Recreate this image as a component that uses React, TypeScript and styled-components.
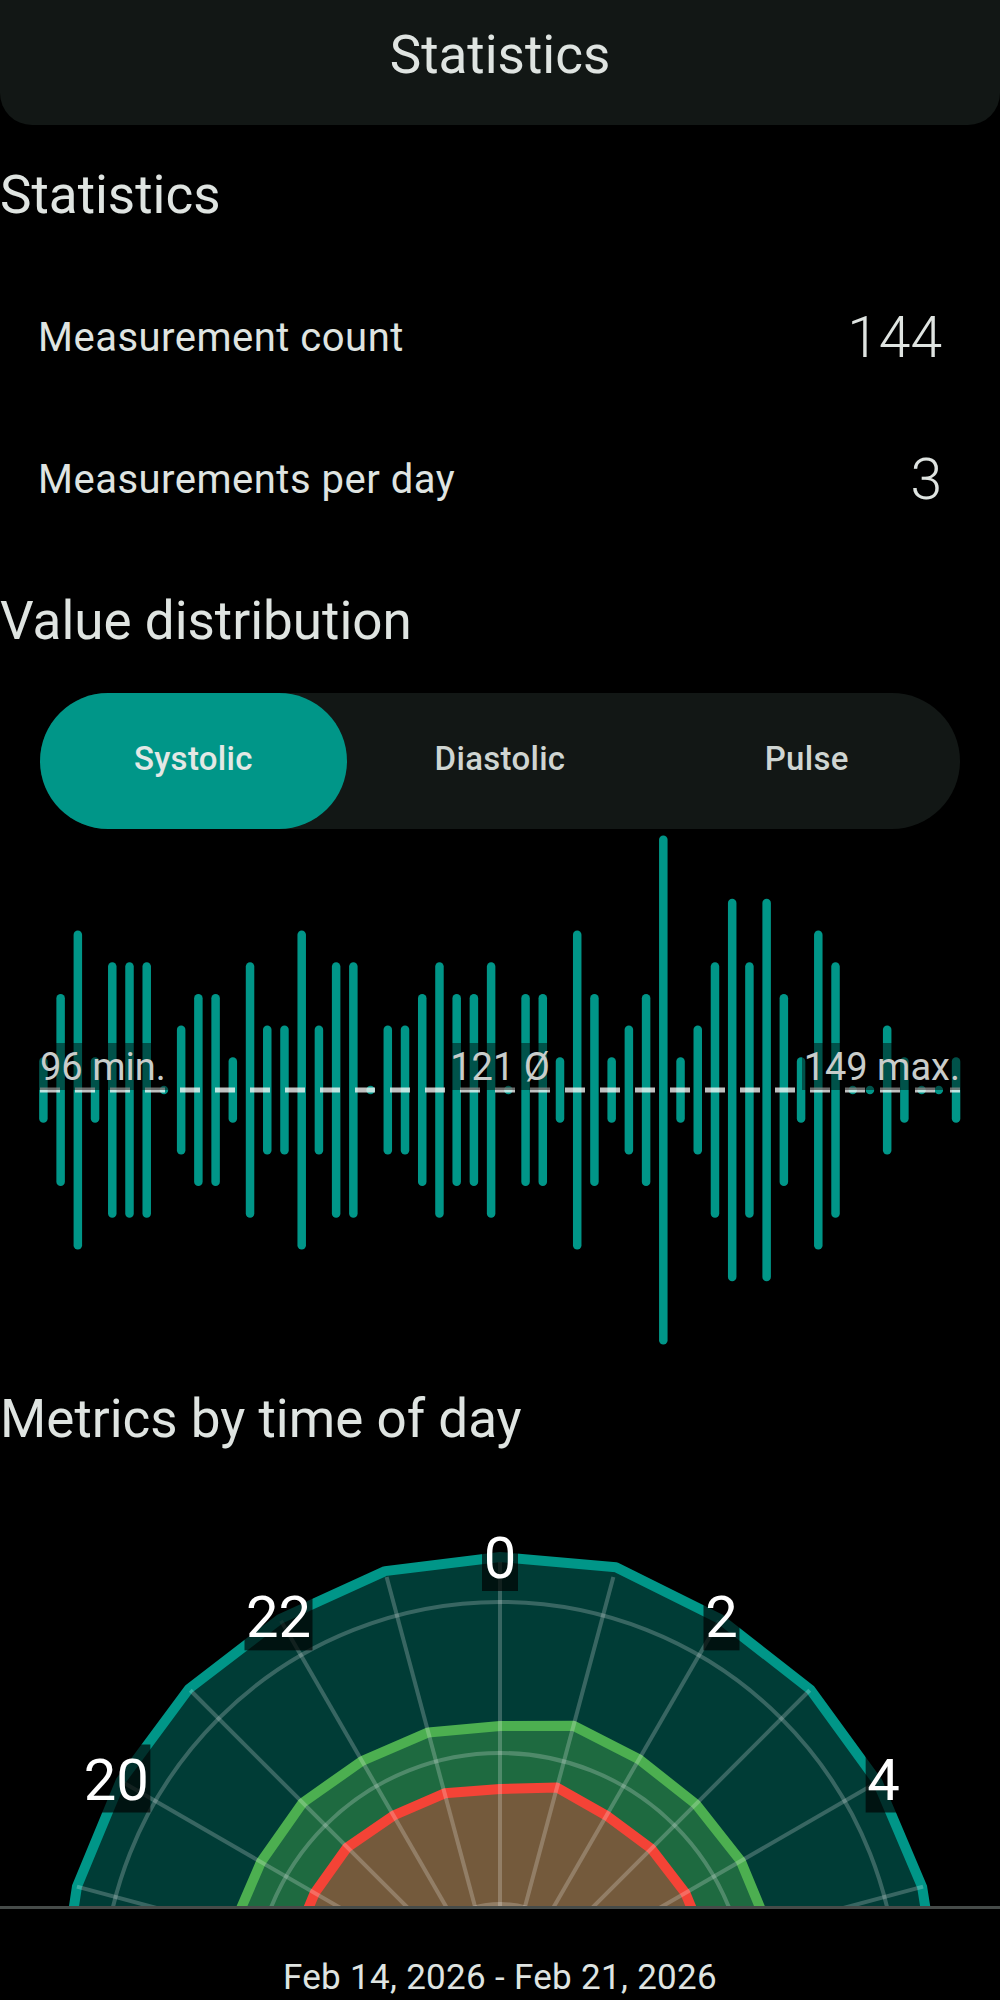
import React from "react";
import styled, { createGlobalStyle } from "styled-components";

const GlobalStyle = createGlobalStyle`
  html, body {
    margin: 0;
    padding: 0;
    background: #000;
  }
  body {
    font-family: Roboto, "Noto Sans", sans-serif;
    color: #dfe4e1;
  }
`;

const TEAL = "#009688";
const GREEN = "#4caf50";
const RED = "#f44336";

// count of measurements per systolic value, 96..149
const counts = [
  1, 3, 5, 1, 4, 4, 4, 0, 2, 3, 3, 1, 4, 2, 2, 5, 2, 4, 4, 0, 2, 2, 3, 4, 3, 3, 4,
  0, 3, 3, 1, 5, 3, 1, 2, 3, 8, 1, 2, 4, 6, 4, 6, 3, 1, 5, 4, 0, 0, 2, 1, 0, 0, 1,
];

const fill24 = (v: number, over: Record<number, number>) =>
  Array.from({ length: 24 }, (_, h) => (h in over ? over[h] : v));

const tealR = fill24(440, { 0: 443, 1: 448, 2: 440, 3: 439, 4: 436, 5: 437, 19: 438, 20: 438, 23: 444 });
const greenR = fill24(278, { 0: 274, 1: 284, 3: 277, 19: 277, 20: 276, 21: 279, 22: 276, 23: 277 });
const redR = fill24(214, { 0: 211, 1: 220, 2: 213, 21: 216, 22: 213 });

const Page = styled.div`
  width: 1000px;
  height: 2000px;
  display: flex;
  flex-direction: column;
  overflow: hidden;
  background: #000;
`;

const TopBar = styled.header`
  height: 125px;
  flex-shrink: 0;
  box-sizing: border-box;
  padding-top: 28px;
  background: #121715;
  border-radius: 0 0 32px 32px;
  display: flex;
  justify-content: center;
  align-items: flex-start;
`;

const TopTitle = styled.h1`
  margin: 0;
  font-size: 53px;
  font-weight: 400;
  line-height: 54px;
  color: #dfe4e1;
`;

const Content = styled.main`
  flex: 1;
  overflow: hidden;
  display: flex;
  flex-direction: column;
`;

const SectionTitle = styled.h2`
  margin: 38px 0 0;
  height: 64px;
  line-height: 64px;
  font-size: 53px;
  font-weight: 400;
  color: #dfe4e1;
`;

const StatList = styled.div`
  margin-top: 40px;
  display: flex;
  flex-direction: column;
`;

const StatRow = styled.div`
  height: 142px;
  display: flex;
  align-items: center;
  justify-content: space-between;
  padding: 0 58px 0 38px;
`;

const StatLabel = styled.span`
  font-size: 40px;
  letter-spacing: 0.5px;
  line-height: 48px;
  color: #dfe4e1;
`;

const StatValue = styled.span`
  font-size: 57px;
  font-weight: 300;
  line-height: 64px;
  color: #dfe4e1;
`;

const Segmented = styled.div`
  margin: 40px 40px 0;
  height: 136px;
  border-radius: 68px;
  background: #121715;
  display: grid;
  grid-template-columns: repeat(3, 1fr);
`;

const Segment = styled.button<{ $active?: boolean }>`
  border: 0;
  margin: 0;
  padding: 0 0 5px;
  border-radius: 68px;
  background: ${(p) => (p.$active ? TEAL : "transparent")};
  color: ${(p) => (p.$active ? "#e3e8e5" : "#cfd5d2")};
  font-family: Roboto, sans-serif;
  font-size: 33px;
  font-weight: 500;
  letter-spacing: 0.3px;
  cursor: pointer;
`;

const DistChart = styled.svg`
  display: block;
  margin-top: 6px;
  flex-shrink: 0;
`;

const RadarChart = styled.svg`
  display: block;
  flex-shrink: 0;
`;

const Footer = styled.footer`
  height: 94px;
  flex-shrink: 0;
  box-sizing: border-box;
  border-top: 3px solid #464b49;
  padding-top: 49px;
  text-align: center;
  font-size: 35px;
  line-height: 40px;
  letter-spacing: 0.3px;
  color: #dfe4e1;
`;

const Distribution = () => {
  const mid = 255;
  const labels = [
    { text: "96 min.", x: 40, w: 126, anchor: "start" as const },
    { text: "121 Ø", x: 500, w: 100, anchor: "middle" as const },
    { text: "149 max.", x: 960, w: 156, anchor: "end" as const },
  ];
  return (
    <DistChart width={1000} height={514} viewBox="0 0 1000 514">
      {counts.map((c, i) => {
        const x = 43.4 + i * 17.22;
        const half = c === 0 ? 0 : 31.7 * c + 1 - 4.25;
        return (
          <line
            key={i}
            x1={x}
            x2={x}
            y1={mid - half}
            y2={mid + half}
            stroke={TEAL}
            strokeWidth={8.5}
            strokeLinecap="round"
          />
        );
      })}
      <line
        x1={40}
        x2={960}
        y1={mid}
        y2={mid}
        stroke="rgba(255,255,255,0.75)"
        strokeWidth={5}
        strokeDasharray="20 15"
      />
      {labels.map((l) => {
        const left = l.anchor === "start" ? l.x : l.anchor === "middle" ? l.x - l.w / 2 : l.x - l.w;
        return (
          <g key={l.text}>
            <rect x={left - 2} y={208} width={l.w + 4} height={47} fill="rgba(0,0,0,0.45)" />
            <text
              x={l.x}
              y={245}
              textAnchor={l.anchor}
              fontFamily="Roboto, sans-serif"
              fontSize={38}
              fill="#c9cdcb"
            >
              {l.text}
            </text>
          </g>
        );
      })}
    </DistChart>
  );
};

const CX = 500;
const CY = 549;
const pt = (h: number, r: number) => {
  const a = (h * 15 * Math.PI) / 180;
  return [CX + r * Math.sin(a), CY - r * Math.cos(a)];
};
const poly = (radii: number[]) => radii.map((r, h) => pt(h, r).join(",")).join(" ");

const Radar = () => {
  const hourLabels = [0, 2, 4, 20, 22];
  return (
    <RadarChart width={1000} height={455} viewBox="0 0 1000 455">
      <polygon points={poly(tealR)} fill="rgba(0,150,136,0.4)" stroke={TEAL} strokeWidth={10} strokeLinejoin="round" />
      <polygon points={poly(greenR)} fill="rgba(76,175,80,0.4)" stroke={GREEN} strokeWidth={10} strokeLinejoin="round" />
      <polygon points={poly(redR)} fill="rgba(244,67,54,0.4)" stroke={RED} strokeWidth={10} strokeLinejoin="round" />
      {[96, 247, 398].map((r) => (
        <circle key={r} cx={CX} cy={CY} r={r} fill="none" stroke="rgba(255,255,255,0.22)" strokeWidth={4} />
      ))}
      {Array.from({ length: 24 }, (_, h) => {
        const [x, y] = pt(h, 438);
        return <line key={h} x1={CX} y1={CY} x2={x} y2={y} stroke="rgba(255,255,255,0.22)" strokeWidth={4} />;
      })}
      {hourLabels.map((h) => {
        const [x, y] = pt(h, 443);
        const text = String(h);
        const w = text.length * 32 + 4;
        return (
          <g key={h}>
            <rect x={x - w / 2} y={y - 34} width={w} height={68} fill="rgba(0,0,0,0.68)" />
            <text
              x={x}
              y={y + 21}
              textAnchor="middle"
              fontFamily="Roboto, sans-serif"
              fontSize={58}
              fill="#ffffff"
            >
              {text}
            </text>
          </g>
        );
      })}
    </RadarChart>
  );
};

export default function App() {
  return (
    <>
      <GlobalStyle />
      <Page>
        <TopBar>
          <TopTitle>Statistics</TopTitle>
        </TopBar>
        <Content>
          <SectionTitle>Statistics</SectionTitle>
          <StatList>
            <StatRow>
              <StatLabel>Measurement count</StatLabel>
              <StatValue>144</StatValue>
            </StatRow>
            <StatRow>
              <StatLabel>Measurements per day</StatLabel>
              <StatValue>3</StatValue>
            </StatRow>
          </StatList>
          <SectionTitle>Value distribution</SectionTitle>
          <Segmented>
            <Segment $active>Systolic</Segment>
            <Segment>Diastolic</Segment>
            <Segment>Pulse</Segment>
          </Segmented>
          <Distribution />
          <SectionTitle>Metrics by time of day</SectionTitle>
          <Radar />
        </Content>
        <Footer>Feb 14, 2026 - Feb 21, 2026</Footer>
      </Page>
    </>
  );
}
